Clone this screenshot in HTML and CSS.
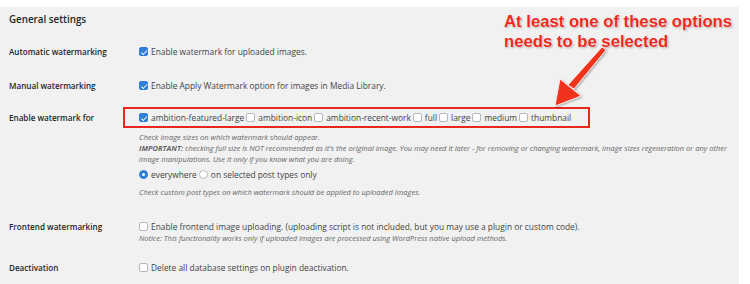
FILE: index.html
```html
<!DOCTYPE html>
<html>
<head>
<meta charset="utf-8">
<link rel="stylesheet" href="styles.css">
</head>
<body>
<div class="page">
  <h2 class="title">General settings</h2>

  <div class="row row-auto">
    <div class="label">Automatic watermarking</div>
    <div class="field"><span class="cb on"></span>Enable watermark for uploaded images.</div>
  </div>

  <div class="row row-manual">
    <div class="label">Manual watermarking</div>
    <div class="field"><span class="cb on"></span>Enable Apply Watermark option for images in Media Library.</div>
  </div>

  <div class="row row-sizes">
    <div class="label label-sizes">Enable watermark for</div>
    <div class="field">
      <div class="sizes">
        <span class="cb on"></span><span class="opt">ambition-featured-large</span>
        <span class="cb"></span><span class="opt">ambition-icon</span>
        <span class="cb"></span><span class="opt">ambition-recent-work</span>
        <span class="cb"></span><span class="opt">full</span>
        <span class="cb"></span><span class="opt">large</span>
        <span class="cb"></span><span class="opt">medium</span>
        <span class="cb"></span><span class="opt">thumbnail</span>
      </div>
      <div class="desc desc-first">
        <span class="line">Check image sizes on which watermark should appear.</span>
        <span class="line"><b>IMPORTANT:</b> checking full size is NOT recommended as it's the original image. You may need it later - for removing or changing watermark, image sizes regeneration or any other</span>
        <span class="line">image manipulations. Use it only if you know what you are doing.</span>
      </div>
      <div class="radios"><span class="rb on"></span>everywhere <span class="rb"></span>on selected post types only</div>
      <p class="desc desc-post">Check custom post types on which watermark should be applied to uploaded images.</p>
    </div>
  </div>

  <div class="row row-front">
    <div class="label">Frontend watermarking</div>
    <div class="field">
      <div><span class="cb"></span>Enable frontend image uploading. (uploading script is not included, but you may use a plugin or custom code).</div>
      <p class="desc desc-notice">Notice: This functionality works only if uploaded images are processed using WordPress native upload methods.</p>
    </div>
  </div>

  <div class="row row-deact">
    <div class="label">Deactivation</div>
    <div class="field"><span class="cb"></span>Delete all database settings on plugin deactivation.</div>
  </div>

  <div class="note">At least one of these options<br>needs to be selected</div>
  <svg class="arrow" width="750" height="284" viewBox="0 0 750 284">
    <defs>
      <filter id="sh" x="-20%" y="-20%" width="140%" height="140%">
        <feDropShadow dx="1" dy="1" stdDeviation="1" flood-color="#000" flood-opacity="0.35"/>
      </filter>
    </defs>
    <g filter="url(#sh)">
      <path d="M602 47 L606 50 L574 89 L568 85 Z" fill="#f2321f" stroke="#fff" stroke-width="0.8"/>
      <path d="M555 106 L560 79 L581 96 Z" fill="#f2321f" stroke="#fff" stroke-width="0.8"/>
    </g>
  </svg>
</div>
</body>
</html>
```

FILE: styles.css
```css
html, body {
  margin: 0;
  padding: 0;
  background: #fff;
}
body {
  font-family: "Open Sans", "DejaVu Sans", sans-serif;
  color: #444;
}
.page {
  position: relative;
  margin-top: 7px;
  width: 730px;
  height: 277px;
  padding-left: 9px;
  background: #f1f1f1;
  box-sizing: content-box;
  overflow: hidden;
}
.title {
  margin: 0;
  padding-top: 6px;
  font-size: 9.8px;
  line-height: 14px;
  font-weight: 600;
  color: #23282d;
}
.row {
  display: grid;
  grid-template-columns: 130px 1fr;
  font-size: 8.4px;
  line-height: 12px;
}
.label {
  font-weight: 600;
  color: #23282d;
  font-size: 8.1px;
}
.row-auto { margin-top: 19px; }
.row-manual { margin-top: 22px; }
.row-sizes { margin-top: 15px; }
.label-sizes { line-height: 22px; }
.row-front { margin-top: 23px; }
.row-deact { margin-top: 18px; }

.cb {
  display: inline-block;
  box-sizing: border-box;
  width: 9px;
  height: 9px;
  border: 1px solid #b4b9be;
  border-radius: 2px;
  background: #fff;
  margin-right: 3px;
  vertical-align: -1px;
  position: relative;
}
.cb.on {
  background: #2f7fd6;
  border-color: #2f7fd6;
}
.cb.on::after {
  content: "";
  position: absolute;
  left: 2.5px;
  top: 0.5px;
  width: 2px;
  height: 4.5px;
  border: solid #fff;
  border-width: 0 1.4px 1.4px 0;
  transform: rotate(45deg);
}
.sizes {
  display: inline-flex;
  align-items: center;
  margin-left: -16px;
  padding: 0 17px 0 14px;
  border: 2px solid #e8281c;
  height: 17px;
}
.sizes .cb {
  margin-right: 3px;
  margin-left: 2px;
}
.sizes .cb:first-child { margin-left: 0; }
.opt { white-space: nowrap; }

.desc {
  margin: 0;
  font-style: italic;
  color: #666;
  font-size: 7.5px;
  line-height: 11px;
  max-width: 598px;
}
.desc .line {
  display: block;
  white-space: nowrap;
}
.desc b { font-weight: 700; }
.desc-first { margin-top: 4px; }
.radios {
  margin-top: 3px;
  line-height: 13px;
}
.rb {
  display: inline-block;
  box-sizing: border-box;
  width: 9px;
  height: 9px;
  border-radius: 50%;
  border: 1px solid #b4b9be;
  background: #fff;
  vertical-align: -1px;
  margin-right: 3px;
  position: relative;
}
.rb.on {
  background: #2f7fd6;
  border-color: #2f7fd6;
}
.rb.on::after {
  content: "";
  position: absolute;
  left: 2px;
  top: 2px;
  width: 3px;
  height: 3px;
  border-radius: 50%;
  background: #fff;
}
.desc-post { margin-top: 6px; }
.desc-notice { margin-top: 0; }

.note {
  position: absolute;
  left: 504px;
  top: 5px;
  font-family: "Liberation Sans", Arial, sans-serif;
  font-weight: 700;
  font-size: 16.7px;
  line-height: 20px;
  color: #ec2a1c;
  text-shadow: 0 0 1px #fff, 0 0 2px #fff, 1px 1px 2px rgba(0,0,0,0.35);
  white-space: nowrap;
}
.arrow {
  position: absolute;
  left: 0;
  top: -7px;
  pointer-events: none;
}
```
